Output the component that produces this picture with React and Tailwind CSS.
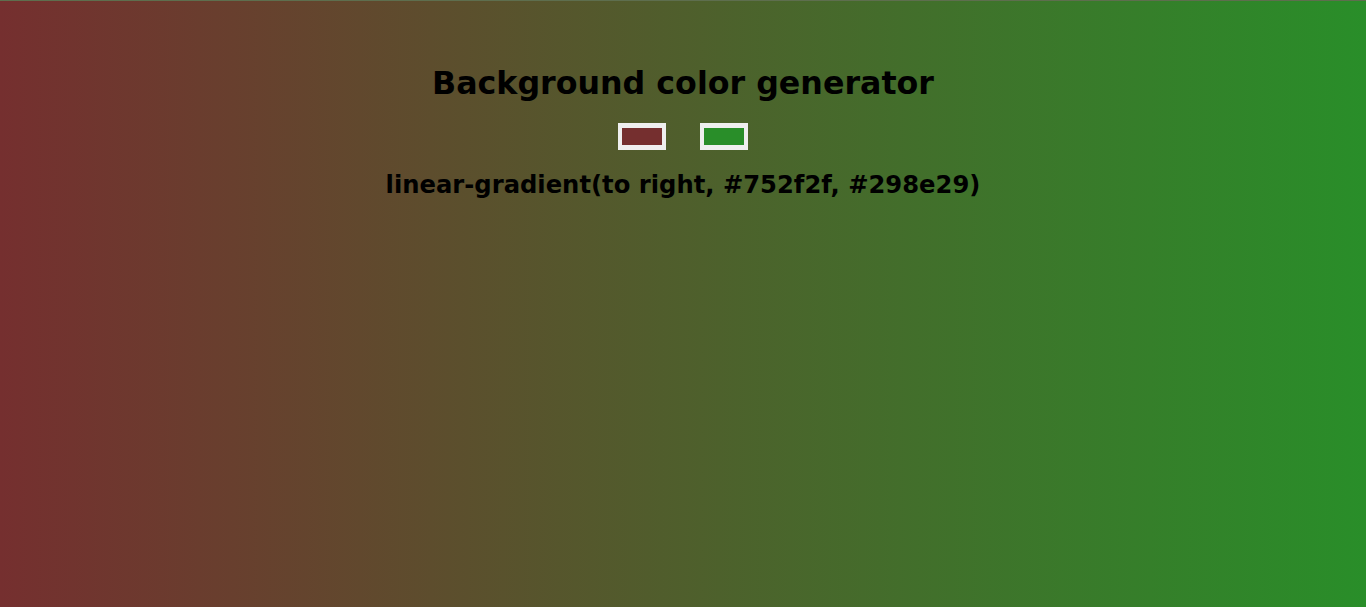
import React from 'react';

const ColorBox = ({ color }) => (
  <div className="w-[48px] h-[27px] bg-[#efefef] px-[4px] py-[5px]">
    <div className="w-full h-full" style={{ backgroundColor: color }} />
  </div>
);

const App = () => {
  const left = '#752f2f';
  const right = '#298e29';

  return (
    <div
      className="min-h-screen w-full flex flex-col items-center text-black"
      style={{
        backgroundImage: `linear-gradient(to right, ${left}, ${right})`,
        fontFamily: '"DejaVu Sans", sans-serif',
      }}
    >
      <div className="h-px w-full bg-[#5e6e4e]" />
      <h1 className="mt-[64px] text-[31.7px] leading-[37px] font-bold">Background color generator</h1>
      <div className="mt-[21px] flex gap-[34px]">
        <ColorBox color={left} />
        <ColorBox color={right} />
      </div>
      <h3 className="mt-[21px] text-[24.25px] leading-[28px] font-bold">
        linear-gradient(to right, {left}, {right})
      </h3>
    </div>
  );
};

export default App;
